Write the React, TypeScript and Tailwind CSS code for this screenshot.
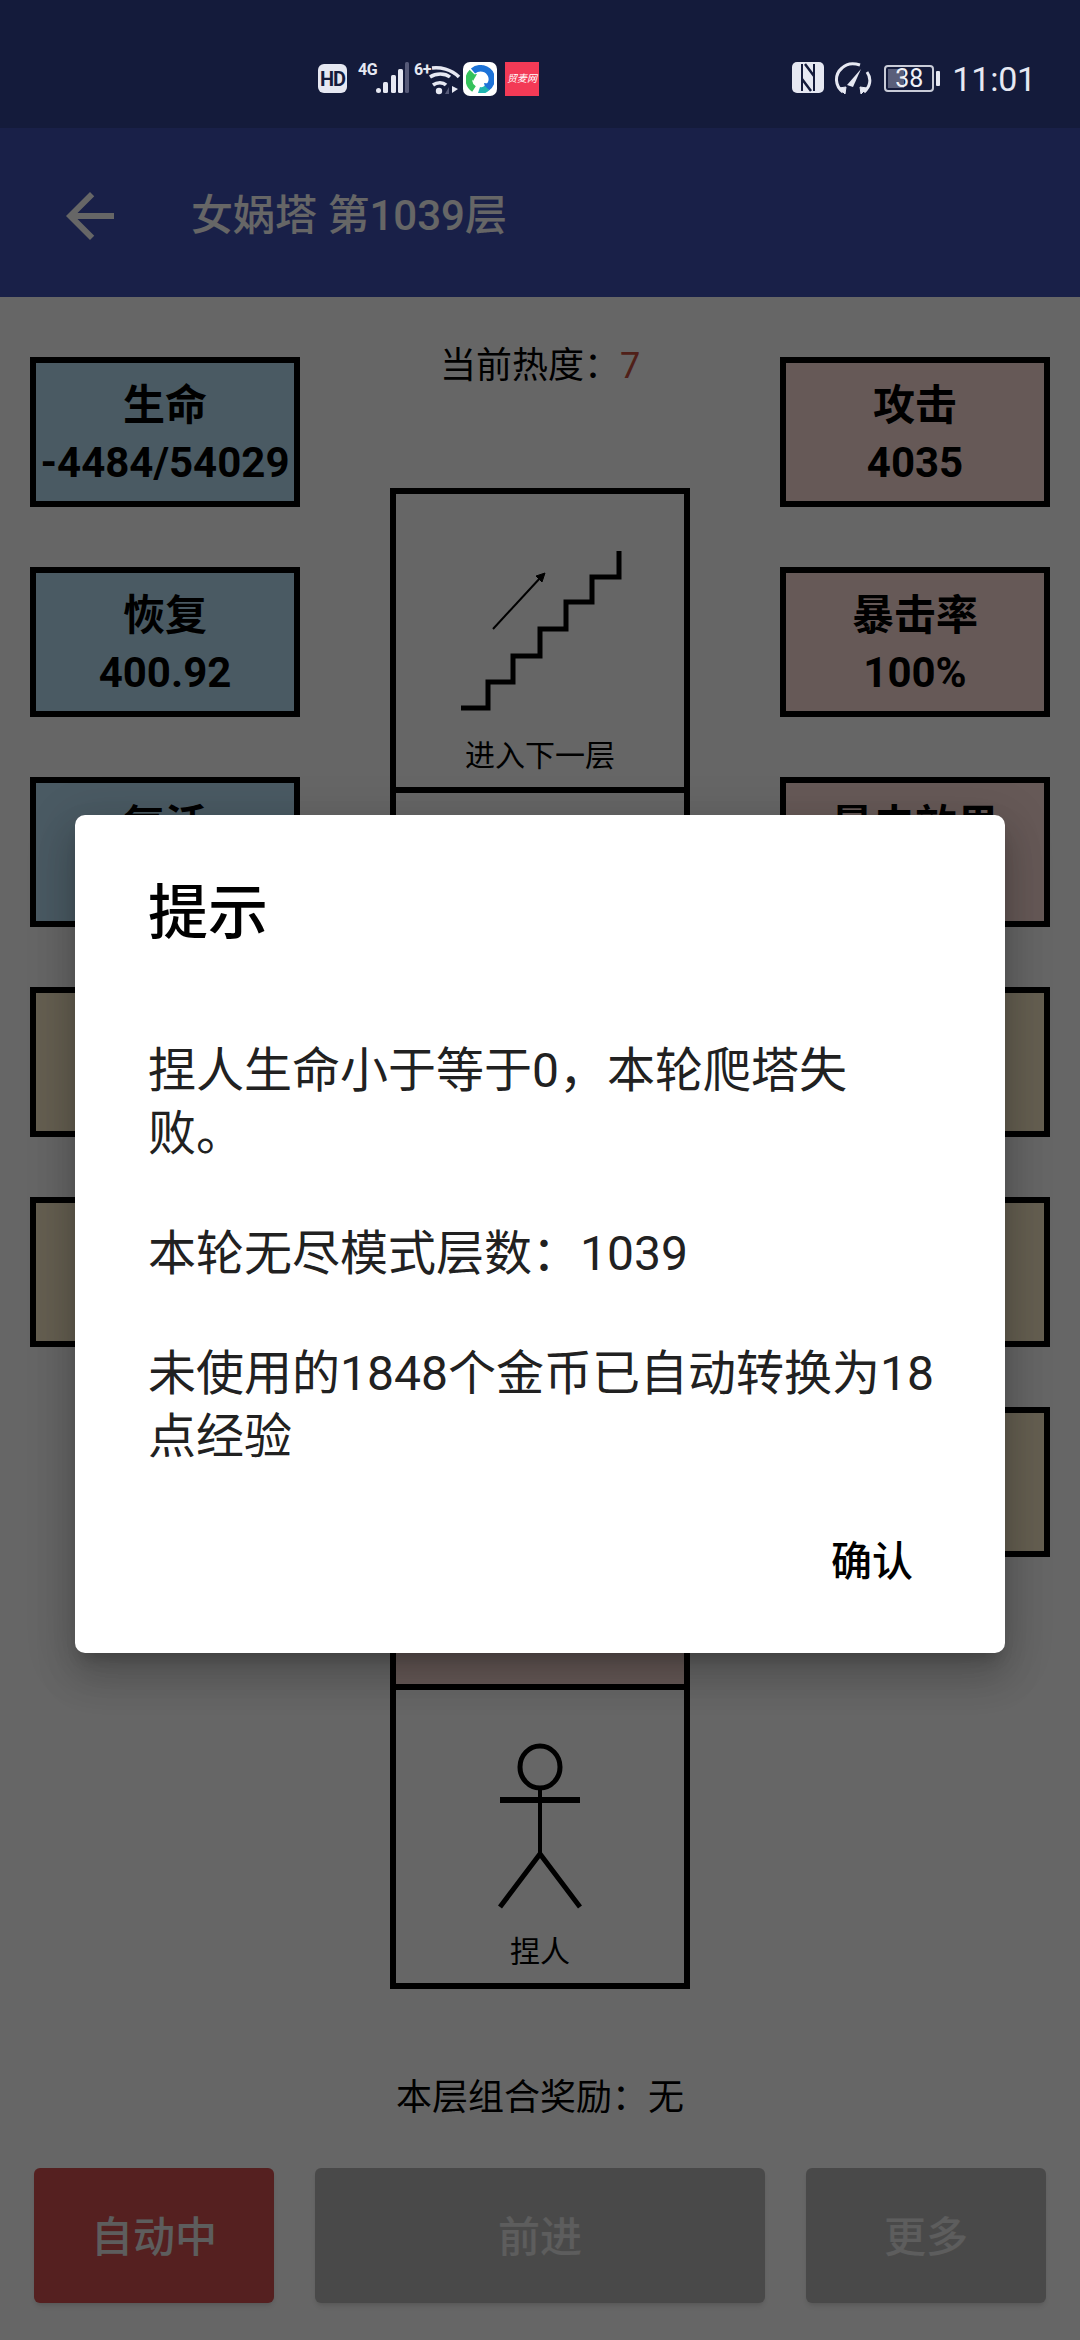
import React from 'react';

const leftCards = [
  { label: '生命', value: '-4484/54029', bg: 'bg-[#b9e1f7]' },
  { label: '恢复', value: '400.92', bg: 'bg-[#b9e1f7]' },
  { label: '复活', bg: 'bg-[#b9e1f7]' },
  { bg: 'bg-[#fcedca]' },
  { bg: 'bg-[#fcedca]' },
];

const rightCards = [
  { label: '攻击', value: '4035', bg: 'bg-[#ffded9]' },
  { label: '暴击率', value: '100%', bg: 'bg-[#ffded9]' },
  { label: '暴击效果', bg: 'bg-[#ffded9]' },
  { bg: 'bg-[#fcedca]' },
  { bg: 'bg-[#fcedca]' },
  { bg: 'bg-[#fcedca]' },
];

const StatCard = ({ label, value, bg }: { label?: string; value?: string; bg: string }) => (
  <div className={`h-[150px] w-[270px] border-[6px] border-black pt-[14px] text-center text-[42px] font-bold leading-[57px] text-black ${bg}`}>
    {label && <div className="whitespace-nowrap">{label}</div>}
    {value && <div className="whitespace-nowrap">{value}</div>}
  </div>
);

const Stairs = () => (
  <svg width="200" height="200" viewBox="0 0 200 200" fill="none" stroke="black">
    <path d="M21 178H48V152H73V126H100V99H126V72H152V47H179V21" strokeWidth="5" />
    <path d="M53 99L101 47" strokeWidth="2" />
    <path d="M105 43L96 46L102 52Z" fill="black" strokeWidth="1" />
  </svg>
);

const Person = () => (
  <svg width="200" height="200" viewBox="0 0 200 200" fill="none" stroke="black" strokeWidth="5">
    <ellipse cx="100" cy="41" rx="20" ry="21" />
    <path d="M60 74H140" strokeWidth="6" />
    <path d="M100 62V128" strokeWidth="4" />
    <path d="M60 181L100 128L140 181" strokeWidth="5" />
  </svg>
);

const Cell = ({ label, icon, bg }: { label?: string; icon?: React.ReactNode; bg?: string }) => (
  <div className={`-mb-[6px] flex h-[305px] w-[300px] flex-col items-center border-[6px] border-black pt-[36px] ${bg ?? ''}`}>
    <div className="h-[200px] w-[200px]">{icon}</div>
    {label && <div className="mt-[6px] text-[30px] leading-[40px] text-black">{label}</div>}
  </div>
);

const StatusBar = () => (
  <div className="flex h-[128px] items-start bg-[#141b3b] pl-[318px] pr-[44px] pt-[62px] text-[#e6e8f2]">
    <div className="mt-[2px] flex h-[29px] w-[29px] items-center justify-center rounded-[6px] bg-[#e6e8f2] text-[20px] font-bold leading-none tracking-[-1px] text-[#141b3b]">
      HD
    </div>
    <div className="ml-[11px] w-[18px] text-[16px] font-bold leading-[15px] tracking-[-0.5px]">4G</div>
    <svg width="38" height="34" viewBox="0 0 38 34" fill="#e6e8f2">
      <rect x="0" y="26" width="5" height="5" rx="2.5" />
      <rect x="7" y="20" width="5" height="11" rx="1.5" />
      <rect x="15" y="13" width="5" height="18" rx="1.5" />
      <rect x="22" y="7" width="5" height="24" rx="1.5" />
      <rect x="29" y="0" width="4" height="31" rx="1.5" fill="#565a78" />
    </svg>
    <div className="w-[15px] text-[16px] font-bold leading-[15px] tracking-[-0.5px]">6+</div>
    <svg className="-ml-[6px]" width="40" height="34" viewBox="0 0 40 34" fill="none" stroke="#e6e8f2" strokeWidth="3.5">
      <path d="M9 6C17 5 28 7 36 15" />
      <path d="M7 15C13 11 22 11 27 15" />
      <path d="M10 23C14 20 20 20 23 23" />
      <circle cx="16" cy="29" r="3.2" fill="#e6e8f2" stroke="none" />
      <path d="M26 32V25L22 32Z" fill="#565a78" stroke="none" />
      <path d="M29 24V31L35 27Z" fill="#e6e8f2" stroke="none" />
    </svg>
    <div className="flex h-[34px] w-[34px] items-center justify-center rounded-[7px] bg-white">
      <svg width="28" height="28" viewBox="0 0 28 28" fill="none" strokeWidth="6.5">
        <path d="M8 24C2 20 1 12 6 7" stroke="#35c25c" />
        <path d="M7 6C13 1 22 3 25 10C27 15 25 20 21 23" stroke="#1d72d8" />
        <path d="M3 10L11 9L7 16Z" fill="#35c25c" stroke="none" />
        <path d="M18 18L26 19L20 26Z" fill="#1d72d8" stroke="none" />
        <path d="M13 25C16 26 19 25 21 23" stroke="#1fb5b0" />
      </svg>
    </div>
    <div className="ml-[8px] flex h-[34px] w-[34px] items-center justify-center bg-[#f33a56] text-[10px] italic leading-none text-white">
      贸麦网
    </div>

    <div className="ml-auto flex items-start">
      <svg width="32" height="32" viewBox="0 0 32 32" fill="none">
        <rect x="0" y="0" width="32" height="31" rx="5" fill="#e6e8f2" />
        <path d="M10 2V29M22 2V29" stroke="#141b3b" strokeWidth="2" />
        <path d="M13 2L22 14M10 17L19 29" stroke="#141b3b" strokeWidth="2.5" />
      </svg>
      <svg className="ml-[10px]" width="38" height="34" viewBox="0 0 38 34" fill="none" stroke="#e6e8f2" strokeWidth="3">
        <path d="M9 30C1 24 0 13 8 6C13 1 20 1 26 3" />
        <path d="M33 10C38 17 36 25 30 30" />
        <path d="M5 26L11 32L12 25Z" fill="#e6e8f2" strokeWidth="1" />
        <path d="M27 32L33 26L26 25Z" fill="#e6e8f2" strokeWidth="1" />
        <path d="M13 23L27 7L19 25Z" fill="#e6e8f2" stroke="none" />
      </svg>
      <div className="relative ml-[12px] mt-[3px] flex h-[27px] w-[50px] items-center justify-center overflow-hidden rounded-[4px] border-2 border-[#c9ccd8]">
        <div className="absolute inset-y-[2px] left-[2px] w-[16px] bg-[#5a5f7a]" />
        <span className="relative text-[25px] leading-none text-[#f0f1f6]">38</span>
      </div>
      <div className="ml-[2px] mt-[9px] h-[15px] w-[4px] rounded-[1px] bg-[#e6e8f2]" />
      <div className="pl-[12px] text-[34px] leading-[34px] tracking-[-0.2px]">11:01</div>
    </div>
  </div>
);

export default function App() {
  return (
    <div className="flex h-[2340px] w-[1080px] flex-col overflow-hidden bg-white font-['Roboto','Noto_Sans_CJK_SC',sans-serif]">
      <StatusBar />

      <div className="relative flex flex-1 flex-col">
        {/* page under the dim */}
        <div className="flex h-[169px] items-center bg-[#3f51b5] pl-[54px] pt-[7px] text-white">
          <svg width="72" height="72" viewBox="0 0 24 24" fill="white">
            <path d="M20 11H7.83l5.59-5.59L12 4l-8 8 8 8 1.41-1.41L7.83 13H20v-2z" />
          </svg>
          <div className="ml-[65px] text-[42px] font-medium leading-none">女娲塔 第1039层</div>
        </div>

        <div className="flex flex-1 justify-between px-[30px]">
          <div className="flex flex-col gap-[60px] pt-[60px]">
            {leftCards.map((c, i) => (
              <StatCard key={i} {...c} />
            ))}
          </div>

          <div className="flex flex-col items-center">
            <div className="mb-[93px] mt-[40px] text-[36px] leading-[58px] text-black">
              当前热度：<span className="text-[#c8503f]">7</span>
            </div>
            <Cell label="进入下一层" icon={<Stairs />} />
            <Cell />
            <Cell />
            <Cell bg="bg-[#ffded9]" />
            <Cell label="捏人" icon={<Person />} />
            <div className="mt-[90px] text-[36px] leading-[50px] text-black">本层组合奖励：无</div>
          </div>

          <div className="flex flex-col gap-[60px] pt-[60px]">
            {rightCards.map((c, i) => (
              <StatCard key={i} {...c} />
            ))}
          </div>
        </div>

        <div className="flex justify-between px-[34px] pb-[37px]">
          <button className="h-[135px] w-[240px] rounded-[6px] bg-[#d45050] pt-[4px] text-[42px] font-medium text-[#e8e8e8] shadow-md">自动中</button>
          <button className="h-[135px] w-[450px] rounded-[6px] bg-[#b7b7b7] pt-[4px] text-[42px] font-medium text-[#e8e8e8] shadow-md">前进</button>
          <button className="h-[135px] w-[240px] rounded-[6px] bg-[#b7b7b7] pt-[4px] text-[42px] font-medium text-[#e8e8e8] shadow-md">更多</button>
        </div>

        {/* dialog and its dim */}
        <div className="absolute inset-0 flex items-center justify-center bg-black/60">
          <div className="h-[838px] w-[930px] rounded-[10px] bg-white pl-[73px] pr-[67px] pt-[64px] shadow-[0_24px_38px_3px_rgba(0,0,0,0.14),0_9px_46px_8px_rgba(0,0,0,0.12),0_11px_15px_-7px_rgba(0,0,0,0.2)]">
            <div className="text-[60px] font-medium leading-[70px] text-black">提示</div>
            <div className="mt-[90px] text-[48px] leading-[63px] text-[#212121] [text-spacing-trim:space-all]">
              <p>捏人生命小于等于0，本轮爬塔失败。</p>
              <p className="mt-[57px]">本轮无尽模式层数：1039</p>
              <p className="mt-[57px]">未使用的1848个金币已自动转换为18点经验</p>
            </div>
            <div className="mr-[25px] mt-[69px] flex justify-end">
              <button className="text-[41px] font-medium leading-[50px] text-black">确认</button>
            </div>
          </div>
        </div>
      </div>
    </div>
  );
}
